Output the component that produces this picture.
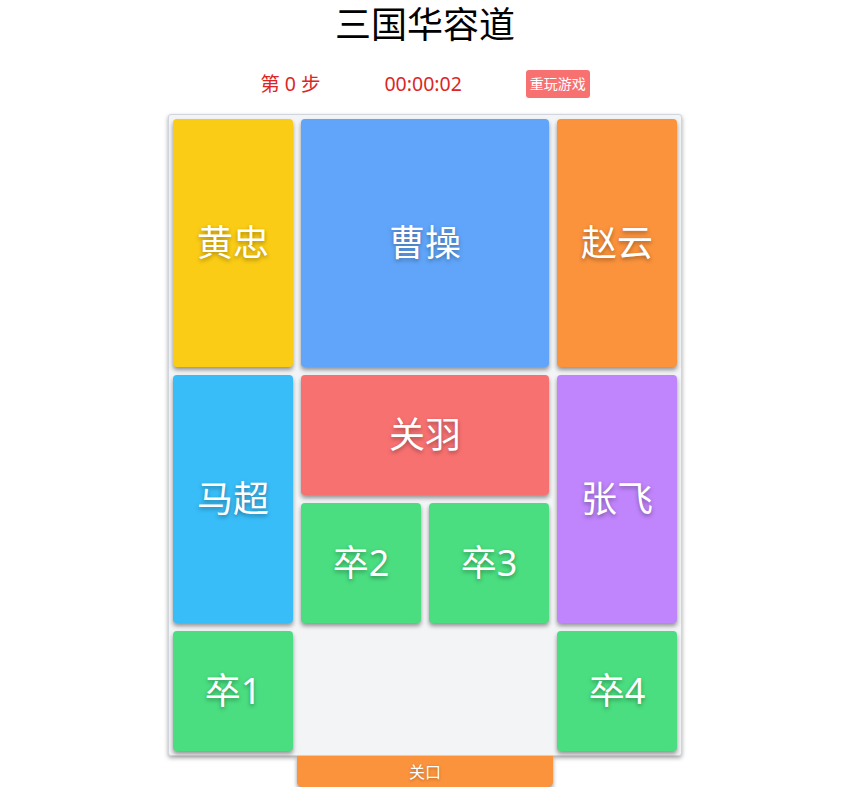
const STYLES = {
    PAGE: "w-[850px] flex flex-col items-center bg-white font-['Noto_Sans','Noto_Sans_CJK_SC',sans-serif]",
    TITLE: "mt-[1px] text-[36px] leading-[48px] text-black",
    INFO_ROW: "mt-[21px] flex items-center gap-[64px] text-[19.5px] leading-7 text-[#dc2626]",
    RESET_BTN: "px-1 h-7 rounded-[3px] bg-[#f87171] text-sm text-white",
    BOARD: "mt-[16px] grid grid-cols-[repeat(4,128px)] grid-rows-[repeat(5,128px)] border border-gray-300 bg-[#f3f4f6] rounded-[3px] shadow-[0_2px_4px_rgba(0,0,0,0.35)]",
    PIECE: "m-1 rounded-[4px] shadow-[0_3px_4px_rgba(0,0,0,0.4)] flex items-center justify-center text-white text-[36px] [text-shadow:0_2px_4px_rgba(0,0,0,0.35)]",
    EXIT: "w-[256px] h-[31px] bg-[#fb923c] rounded-b-[5px] shadow-[0_3px_4px_rgba(0,0,0,0.4)] flex items-center justify-center text-base text-white [text-shadow:0_1px_3px_rgba(0,0,0,0.3)]",
};

type Piece = { name: string; pos: string; color: string };

const PIECES: Piece[] = [
    { name: "黄忠", pos: "col-start-1 row-start-1 row-span-2", color: "bg-[#facc15]" },
    { name: "曹操", pos: "col-start-2 col-span-2 row-start-1 row-span-2", color: "bg-[#60a5fa]" },
    { name: "赵云", pos: "col-start-4 row-start-1 row-span-2", color: "bg-[#fb923c]" },
    { name: "马超", pos: "col-start-1 row-start-3 row-span-2", color: "bg-[#38bdf8]" },
    { name: "关羽", pos: "col-start-2 col-span-2 row-start-3", color: "bg-[#f87171]" },
    { name: "张飞", pos: "col-start-4 row-start-3 row-span-2", color: "bg-[#c084fc]" },
    { name: "卒2", pos: "col-start-2 row-start-4", color: "bg-[#4ade80]" },
    { name: "卒3", pos: "col-start-3 row-start-4", color: "bg-[#4ade80]" },
    { name: "卒1", pos: "col-start-1 row-start-5", color: "bg-[#4ade80]" },
    { name: "卒4", pos: "col-start-4 row-start-5", color: "bg-[#4ade80]" },
];

const App = () => {
    return (
        <div className={STYLES.PAGE}>
            <h1 className={STYLES.TITLE}>三国华容道</h1>

            <div className={STYLES.INFO_ROW}>
                <span>第 0 步</span>
                <span>00:00:02</span>
                <button className={STYLES.RESET_BTN}>重玩游戏</button>
            </div>

            <div className={STYLES.BOARD}>
                {PIECES.map((p) => (
                    <div key={p.name} className={`${STYLES.PIECE} ${p.pos} ${p.color}`}>
                        {p.name}
                    </div>
                ))}
            </div>

            <div className={STYLES.EXIT}>关口</div>
        </div>
    );
};

export default App;
